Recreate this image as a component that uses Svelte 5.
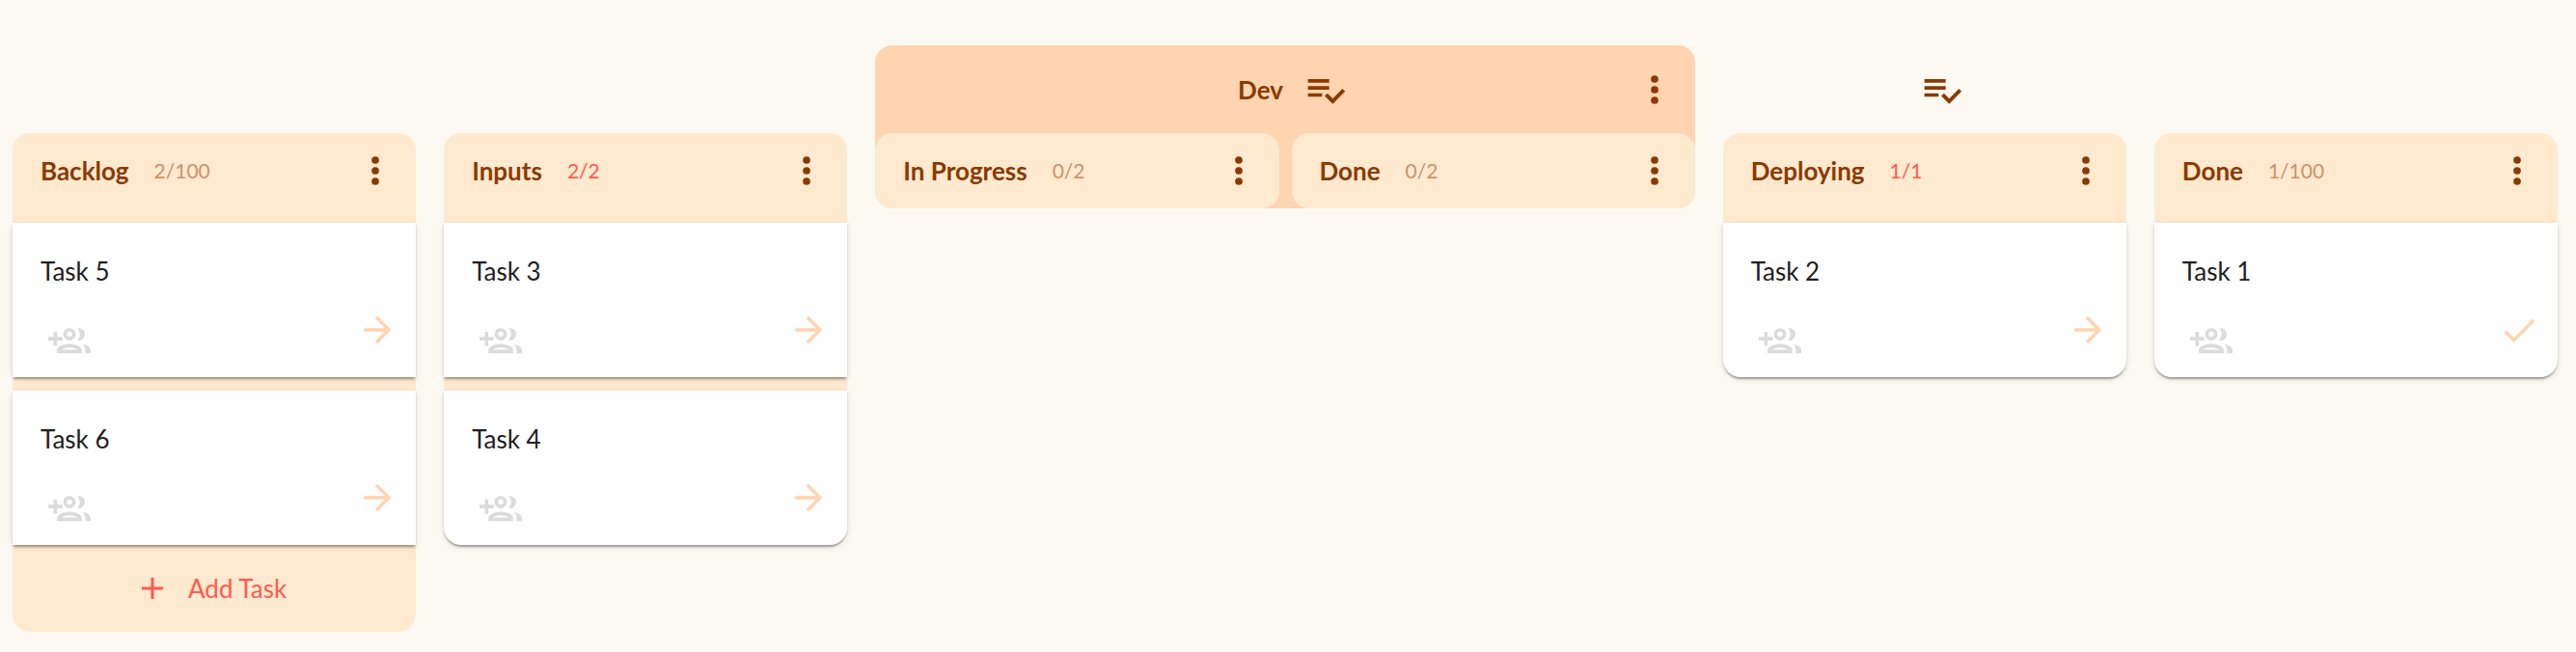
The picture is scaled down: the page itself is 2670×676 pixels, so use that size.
<script>
  const lanes = [
    {
      columns: [
        { title: 'Backlog', count: '2/100', tasks: ['Task 5', 'Task 6'], canAdd: true }
      ]
    },
    { columns: [{ title: 'Inputs', count: '2/2', full: true, tasks: ['Task 3', 'Task 4'] }] },
    {
      title: 'Dev',
      group: true,
      policy: true,
      columns: [
        { title: 'In Progress', count: '0/2', tasks: [] },
        { title: 'Done', count: '0/2', tasks: [] }
      ]
    },
    { policy: true, columns: [{ title: 'Deploying', count: '1/1', full: true, tasks: ['Task 2'] }] },
    { columns: [{ title: 'Done', count: '1/100', tasks: ['Task 1'], last: true }] }
  ];
</script>

{#snippet menu(name)}
  <button class="icon-button" aria-label={`${name} menu`}>
    <svg viewBox="0 0 24 24" width="44" height="44" fill="currentColor">
      <circle cx="12" cy="6" r="2.1" />
      <circle cx="12" cy="12" r="2.1" />
      <circle cx="12" cy="18" r="2.1" />
    </svg>
  </button>
{/snippet}

<main class="board">
  {#each lanes as lane}
    <section class="lane" class:group={lane.group}>
      <header class="lane-head">
        {#if lane.policy}
          <div class="lane-title">
            <h2>{lane.title ?? ''}</h2>
            <button class="icon-button" aria-label="Definition of done">
              <svg viewBox="0 0 24 24" width="44" height="44" fill="currentColor">
                <path d="M14 10H2v2h12v-2zm0-4H2v2h12V6zM2 16h8v-2H2v2zm19.5-4.5L23 13l-6.99 7-4.51-4.5L13 14l3.01 3 5.49-5.5z" />
              </svg>
            </button>
          </div>
        {/if}
        {#if lane.group}
          <div class="lane-menu">{@render menu(lane.title)}</div>
        {/if}
      </header>
      <div class="columns">
        {#each lane.columns as column}
          <section class="column">
            <header class="column-head">
              <h3>{column.title}</h3>
              <span class="count" class:full={column.full}>{column.count}</span>
              {@render menu(column.title)}
            </header>
            {#if column.tasks.length}
              <div class="cards">
                {#each column.tasks as task}
                  <article class="card">
                    <h4>{task}</h4>
                    <div class="card-actions">
                      <button class="icon-button assign" aria-label={`Assign people to ${task}`}>
                        <svg viewBox="0 0 24 24" width="44" height="44" fill="currentColor">
                          <path d="M5 7.1H3V10H0v2h3v3h2v-3h3v-2H5z" />
                          <path fill-rule="evenodd" d="M12 5a3.5 3.5 0 1 0 0 7a3.5 3.5 0 0 0 0-7zm0 2a1.5 1.5 0 1 1 0 3a1.5 1.5 0 0 1 0-3z" />
                          <path fill-rule="evenodd" d="M12 13.9c-2.34 0-7 1.1-7 3.6v1.7h14v-1.7c0-2.5-4.66-3.6-7-3.6zm-4.66 3.3c.84-.7 2.87-1.3 4.66-1.3s3.82.6 4.66 1.3z" />
                          <path d="M16.4 5.1A3.5 3.5 0 1 1 16.4 11.9C18.4 9.9 18.4 7.1 16.4 5.1z" />
                          <path d="M19.5 14.2c2.3.4 4.5 1.5 4.5 3.4v1.6h-3v-1.6c0-1.4-.6-2.5-1.5-3.4z" />
                        </svg>
                      </button>
                      <button class="icon-button move" aria-label={column.last ? `Complete ${task}` : `Move ${task}`}>
                        <svg viewBox="0 0 32 32" width="32" height="32" fill="none" stroke="currentColor" stroke-width="3.6" stroke-linecap="round" stroke-linejoin="round">
                          {#if column.last}
                            <path stroke-linejoin="miter" d="M2.7 18.7l8 8L30.2 7" />
                          {:else}
                            <path d="M3.4 16H27M16 4l12 12-12 12" />
                          {/if}
                        </svg>
                      </button>
                    </div>
                  </article>
                {/each}
              </div>
            {/if}
            {#if column.canAdd}
              <button class="add">
                <svg viewBox="0 0 22 22" width="22" height="22" fill="none" stroke="currentColor" stroke-width="3">
                  <path d="M0 11h22M11 0v22" />
                </svg>
                Add Task
              </button>
            {/if}
          </section>
        {/each}
      </div>
    </section>
  {/each}
</main>

<style>
  :global(body) {
    margin: 0;
    background: #fcf9f2;
  }

  .board {
    display: flex;
    align-items: flex-start;
    gap: 29px;
    padding: 47px 19px 21px 13px;
    color: #8a3a00;
    font-family: Lato, sans-serif;
    font-size: 26px;
    line-height: 30px;
  }

  h2,
  h3,
  h4 {
    margin: 0;
    font-size: inherit;
  }

  h2,
  h3 {
    font-weight: 700;
  }

  button {
    margin: 0;
    padding: 0;
    border: 0;
    background: none;
    color: inherit;
    font: inherit;
    cursor: pointer;
  }

  svg {
    display: block;
    overflow: visible;
  }

  .icon-button {
    display: block;
  }

  .lane {
    flex: 1 1 0;
    min-width: 0;
    border-radius: 18px;
  }

  .lane.group {
    flex: 2 1 13px;
    background: #ffd4b0;
  }

  .lane-head {
    display: flex;
    align-items: center;
    justify-content: center;
    position: relative;
    height: 91px;
  }

  .lane-title {
    display: flex;
    align-items: center;
    gap: 22px;
    padding-left: 15px;
  }

  .lane-menu {
    position: absolute;
    right: 20px;
  }

  .columns {
    display: flex;
    gap: 13px;
  }

  .column {
    flex: 1 1 0;
    min-width: 0;
    border-radius: 18px;
    background: #ffe9cf;
  }

  .column-head {
    display: flex;
    align-items: center;
    height: 78px;
    padding: 0 20px 0 29px;
  }

  .count {
    flex: 1;
    margin-left: 26px;
    color: #c9946b;
    font-size: 21px;
  }

  .count.full {
    color: #ff5a4f;
  }

  .cards {
    display: flex;
    flex-direction: column;
    gap: 14px;
    padding-top: 15px;
  }

  .card {
    display: flex;
    flex-direction: column;
    justify-content: space-between;
    box-sizing: border-box;
    min-height: 160px;
    padding: 35px 24px 16px 29px;
    background: #fff;
    box-shadow:
      0 4px 2px -2px rgba(0, 0, 0, 0.2),
      0 2px 2px rgba(0, 0, 0, 0.14),
      0 2px 6px rgba(0, 0, 0, 0.12);
  }

  .cards:last-child .card:last-child {
    border-radius: 0 0 18px 18px;
  }

  h4 {
    color: #212121;
    font-weight: 400;
  }

  .card-actions {
    display: flex;
    align-items: flex-start;
    justify-content: space-between;
    padding-left: 8px;
  }

  .assign {
    color: #dbdbdb;
  }

  .move {
    margin-top: -5px;
    color: #ffd4b0;
  }

  .add {
    display: flex;
    align-items: center;
    justify-content: center;
    gap: 26px;
    width: 100%;
    height: 90px;
    color: #ff5a4f;
  }
</style>
